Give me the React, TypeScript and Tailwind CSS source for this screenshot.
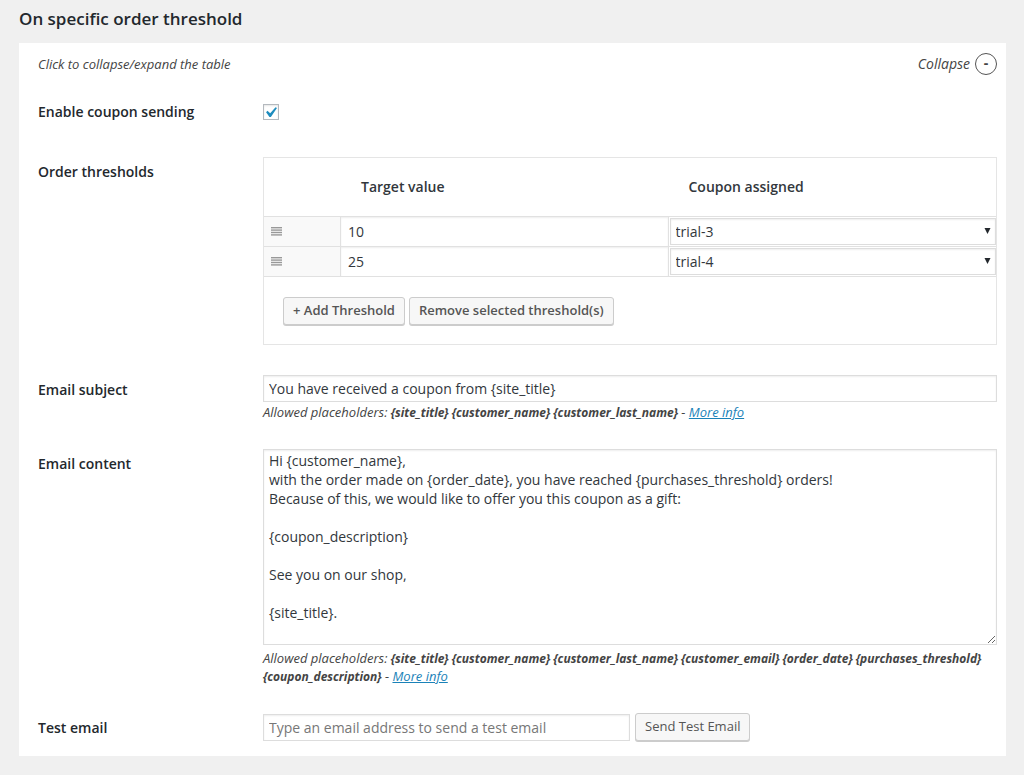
import { useState } from "react";
import type { ReactNode } from "react";

const COUPONS = ["trial-3", "trial-4"];

const DEFAULT_CONTENT = `Hi {customer_name},
with the order made on {order_date}, you have reached {purchases_threshold} orders!
Because of this, we would like to offer you this coupon as a gift:

{coupon_description}

See you on our shop,

{site_title}.`;

const fieldClass =
  "border border-[#ddd] bg-white text-sm text-[#32373c] shadow-[inset_0_1px_2px_rgba(0,0,0,0.07)] focus:outline-none focus:border-[#5b9dd9]";

const buttonClass =
  "h-7 rounded-[3px] border border-[#ccc] bg-[#f7f7f7] px-[9px] text-[13px] text-[#555] shadow-[0_1px_0_#ccc] whitespace-nowrap hover:bg-[#fafafa] cursor-pointer";

const labelClass = "block text-sm leading-5 font-semibold text-[#23282d]";

function Row({
  label,
  htmlFor,
  className,
  children,
}: {
  label: string;
  htmlFor?: string;
  className: string;
  children: ReactNode;
}) {
  return (
    <div className={`flex items-start ${className}`}>
      <div className="w-[225px] shrink-0 pt-[5px]">
        {htmlFor ? (
          <label htmlFor={htmlFor} className={labelClass}>
            {label}
          </label>
        ) : (
          <span className={labelClass}>{label}</span>
        )}
      </div>
      <div className="min-w-0 flex-1">{children}</div>
    </div>
  );
}

function Placeholders({ names }: { names: string[] }) {
  return (
    <p className="text-[13px] leading-[18px] text-[#444] italic">
      Allowed placeholders:{" "}
      <strong className="text-xs leading-none font-bold">
        {names.map((name) => `{${name}}`).join(" ")}
      </strong>{" "}
      -{" "}
      <a href="#" className="text-[#1a82b8] underline">
        More info
      </a>
    </p>
  );
}

function DragHandle() {
  return (
    <svg width="11" height="9" viewBox="0 0 11 9" fill="#999" aria-hidden="true">
      <rect y="0" width="11" height="1.4" />
      <rect y="2.4" width="11" height="1.4" />
      <rect y="4.8" width="11" height="1.4" />
      <rect y="7.2" width="11" height="1.4" />
    </svg>
  );
}

function ThresholdTable() {
  const [rows, setRows] = useState([
    { target: "10", coupon: "trial-3" },
    { target: "25", coupon: "trial-4" },
  ]);

  function update(index: number, patch: Partial<{ target: string; coupon: string }>) {
    setRows(rows.map((row, i) => (i === index ? { ...row, ...patch } : row)));
  }

  return (
    <table className="w-full table-fixed border-separate border-spacing-0 border border-[#e5e5e5]">
      <colgroup>
        <col className="w-[77px]" />
        <col />
        <col />
      </colgroup>
      <thead>
        <tr className="h-[59px] text-left text-sm text-[#32373c]">
          <td className="border-b border-[#e1e1e1]" />
          <th className="border-b border-[#e1e1e1] px-5 font-semibold">Target value</th>
          <th className="border-b border-[#e1e1e1] px-5 font-semibold">Coupon assigned</th>
        </tr>
      </thead>
      <tbody>
        {rows.map((row, i) => (
          <tr key={i} className="h-[30px]">
            <td className="border-r border-b border-[#e1e1e1] bg-[#f9f9f9] px-[7px] py-0">
              <DragHandle />
            </td>
            <td className="border-r border-b border-[#e1e1e1] p-0">
              <input
                type="text"
                aria-label="Target value"
                value={row.target}
                onChange={(e) => update(i, { target: e.target.value })}
                className="block h-[29px] w-full bg-white px-[7px] text-sm text-[#32373c] shadow-[inset_0_1px_2px_rgba(0,0,0,0.07)] focus:outline-none"
              />
            </td>
            <td className="border-b border-[#e1e1e1] p-0">
              <div className="relative pl-px">
                <select
                  aria-label="Coupon assigned"
                  value={row.coupon}
                  onChange={(e) => update(i, { coupon: e.target.value })}
                  className={`block h-[27px] w-full appearance-none px-[5px] ${fieldClass}`}
                >
                  {COUPONS.map((coupon) => (
                    <option key={coupon}>{coupon}</option>
                  ))}
                </select>
                <svg
                  className="pointer-events-none absolute top-2.5 right-[5px]"
                  width="7"
                  height="6"
                  viewBox="0 0 7 6"
                  fill="#23282d"
                  aria-hidden="true"
                >
                  <path d="M0.5 0h6L3.5 6z" />
                </svg>
              </div>
            </td>
          </tr>
        ))}
      </tbody>
      <tfoot>
        <tr>
          <td colSpan={3} className="h-[67px] pr-5 pl-[19px]">
            <div className="flex gap-1">
              <button
                type="button"
                className={`font-semibold ${buttonClass}`}
                onClick={() => setRows([...rows, { target: "", coupon: COUPONS[0] }])}
              >
                + Add Threshold
              </button>
              <button type="button" className={`font-semibold ${buttonClass}`}>
                Remove selected threshold(s)
              </button>
            </div>
          </td>
        </tr>
      </tfoot>
    </table>
  );
}

export default function App() {
  const [open, setOpen] = useState(true);
  const [enabled, setEnabled] = useState(true);
  const [subject, setSubject] = useState("You have received a coupon from {site_title}");
  const [content, setContent] = useState(DEFAULT_CONTENT);
  const [testEmail, setTestEmail] = useState("");

  return (
    <main className="min-h-screen bg-[#f0f0f0] pt-[7px] pr-[18px] pb-[19px] pl-[19px] font-['Open_Sans',sans-serif]">
      <h2 className="mb-3 text-[17px] leading-6 font-semibold text-[#23282d]">
        On specific order threshold
      </h2>

      <section className="bg-white pt-2.5 pr-[9px] pb-[15px] pl-[19px]">
        <button
          type="button"
          onClick={() => setOpen(!open)}
          className="flex w-full cursor-pointer items-center justify-between text-[#444] italic"
        >
          <span className="text-[13px] leading-5">Click to collapse/expand the table</span>
          <span className="flex h-[22px] items-center gap-[5px] text-sm">
            {open ? "Collapse" : "Expand"}
            <span className="flex size-[22px] items-center justify-center rounded-full border border-[#555] pb-0.5 leading-5 font-bold not-italic">
              {open ? "-" : "+"}
            </span>
          </span>
        </button>

        {open && (
          <>
            <Row label="Enable coupon sending" htmlFor="enabled" className="mt-[22px]">
              <div className="relative mt-[7px] size-4">
                <input
                  id="enabled"
                  type="checkbox"
                  checked={enabled}
                  onChange={(e) => setEnabled(e.target.checked)}
                  className="peer block size-4 appearance-none border border-[#b4b9be] bg-white shadow-[inset_0_1px_2px_rgba(0,0,0,0.1)]"
                />
                <svg
                  className="pointer-events-none absolute -top-0.5 -left-[3px] hidden peer-checked:block"
                  width="21"
                  height="21"
                  viewBox="0 0 20 20"
                  fill="#1e8cbe"
                  aria-hidden="true"
                >
                  <path d="M14.83 4.89l1.34.94-5.81 8.38H9.02L5.78 9.67l1.34-1.25 2.57 2.4z" />
                </svg>
              </div>
            </Row>

            <Row label="Order thresholds" className="mt-[35px]">
              <ThresholdTable />
            </Row>

            <Row label="Email subject" htmlFor="subject" className="mt-[30px]">
              <input
                id="subject"
                type="text"
                value={subject}
                onChange={(e) => setSubject(e.target.value)}
                className={`mb-px block h-[27px] w-full px-[5px] ${fieldClass}`}
              />
              <Placeholders names={["site_title", "customer_name", "customer_last_name"]} />
            </Row>

            <Row label="Email content" htmlFor="content" className="mt-7">
              <textarea
                id="content"
                value={content}
                onChange={(e) => setContent(e.target.value)}
                className={`mb-1 block h-[196px] w-full resize px-[5px] py-px leading-[19px] ${fieldClass}`}
              />
              <Placeholders
                names={[
                  "site_title",
                  "customer_name",
                  "customer_last_name",
                  "customer_email",
                  "order_date",
                  "purchases_threshold",
                  "coupon_description",
                ]}
              />
            </Row>

            <Row label="Test email" htmlFor="test-email" className="mt-7">
              <div className="flex items-center gap-[5px]">
                <input
                  id="test-email"
                  type="email"
                  value={testEmail}
                  onChange={(e) => setTestEmail(e.target.value)}
                  placeholder="Type an email address to send a test email"
                  className={`h-[27px] w-1/2 px-[5px] placeholder:text-[#777] ${fieldClass}`}
                />
                <button type="button" className={buttonClass}>
                  Send Test Email
                </button>
              </div>
            </Row>
          </>
        )}
      </section>
    </main>
  );
}
